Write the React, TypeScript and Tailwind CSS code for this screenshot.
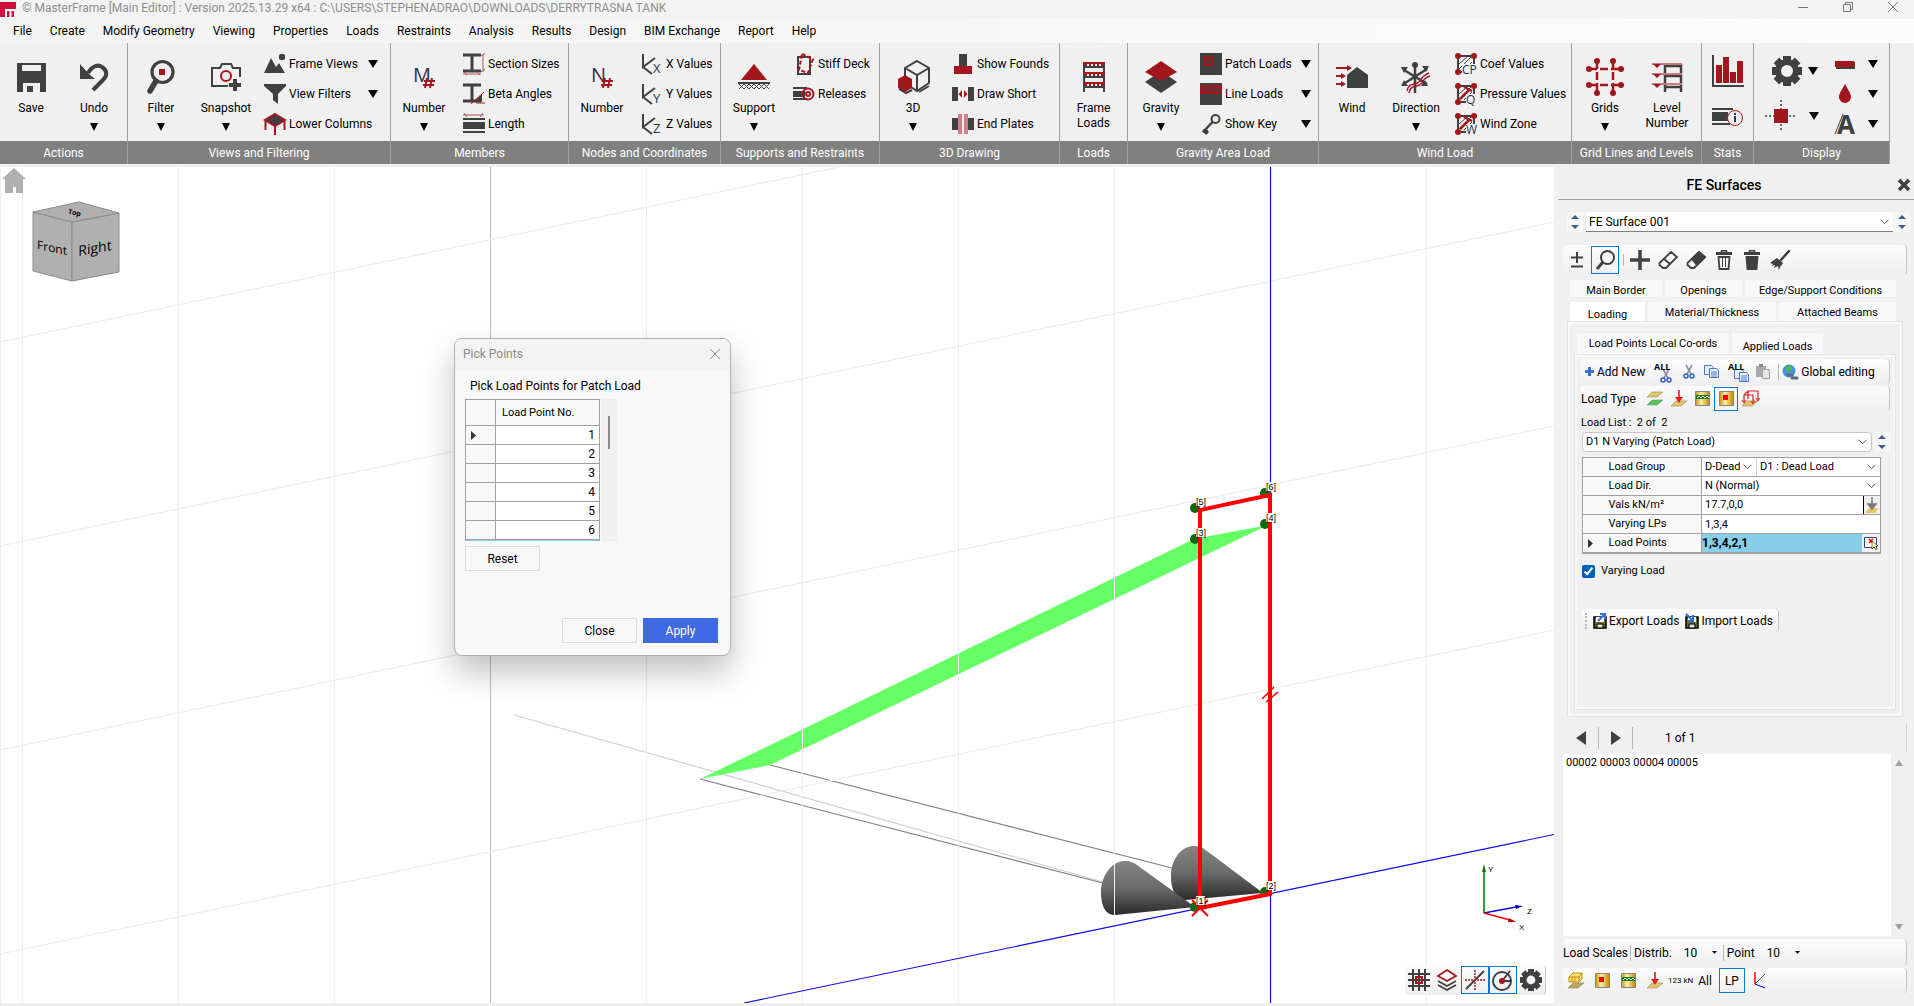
import { useState, type ReactNode } from "react";

const DARK = "#404040";
const RED = "#a3161e";
const NAVY = "#2b3450";

const menus = [
  "File", "Create", "Modify Geometry", "Viewing", "Properties", "Loads", "Restraints",
  "Analysis", "Results", "Design", "BIM Exchange", "Report", "Help",
];

/* ---------- shared bits ---------- */

function Svg({ w, h, children }: { w: number; h: number; children: ReactNode }) {
  return (
    <svg width={w} height={h} viewBox={`0 0 ${w} ${h}`} fill="none" className="shrink-0 overflow-visible" aria-hidden="true">
      {children}
    </svg>
  );
}

function Arrow() {
  return (
    <Svg w={10} h={8}>
      <path d="M0 0h10L5 8z" fill="#000" />
    </Svg>
  );
}

function Group({ title, width, children }: { title: string; width: string; children: ReactNode }) {
  return (
    <section className={`flex shrink-0 flex-col border-r border-[#a0a0a0] ${width}`}>
      <div className="flex h-[98px]">{children}</div>
      <h2 className="flex h-[23px] items-center justify-center bg-[#808080] whitespace-nowrap text-white">{title}</h2>
    </section>
  );
}

function BigButton({ icon, label, arrow, width = "w-[66px]" }: { icon: ReactNode; label: string; arrow?: boolean; width?: string }) {
  return (
    <button className={`flex shrink-0 flex-col items-center pt-4 ${width}`}>
      <span className="flex h-[36px] items-center">{icon}</span>
      <span className="mt-[6px] leading-[15px]">{label}</span>
      {arrow && (
        <span className="mt-[7px]">
          <Svg w={8} h={8}>
            <path d="M0 0h8L4 8z" fill="#000" />
          </Svg>
        </span>
      )}
    </button>
  );
}

function Rows({ className = "", children }: { className?: string; children: ReactNode }) {
  return <div className={`flex flex-1 flex-col pt-[6px] ${className}`}>{children}</div>;
}

function Row({ icon, label, arrow }: { icon: ReactNode; label: string; arrow?: boolean }) {
  return (
    <button className="flex h-[30px] items-center gap-[3px] pr-[7px] pl-[6px] text-left whitespace-nowrap">
      {icon}
      <span>{label}</span>
      {arrow && <span className="ml-auto"><Arrow /></span>}
    </button>
  );
}

function Chevron() {
  return (
    <Svg w={9} h={6}>
      <path d="M.5.7l4 4 4-4" stroke="#555" />
    </Svg>
  );
}

function Combo({ label, value, className }: { label: string; value: string; className: string }) {
  return (
    <div className={`relative flex bg-white ${className}`}>
      <select aria-label={label} defaultValue={value} className="w-full appearance-none overflow-hidden bg-transparent pr-4 pl-[3px] outline-none">
        <option>{value}</option>
      </select>
      <span className="pointer-events-none absolute inset-y-0 right-[4px] flex items-center"><Chevron /></span>
    </div>
  );
}

function Spinner({ label }: { label: string }) {
  return (
    <span className="flex w-4 shrink-0 flex-col items-center justify-center gap-[6px] bg-[#f6f6f6]">
      <button aria-label={`${label} up`}><Svg w={8} h={4}><path d="M0 4h8L4 0z" fill="#3f5a8a" /></Svg></button>
      <button aria-label={`${label} down`}><Svg w={8} h={4}><path d="M0 0h8L4 4z" fill="#3f5a8a" /></Svg></button>
    </span>
  );
}

function Bar({ className, children }: { className: string; children: ReactNode }) {
  return (
    <div className={`flex items-center rounded-sm border-r border-[#c4c4c4] bg-linear-to-b from-[#fcfcfc] to-[#efefef] ${className}`}>
      {children}
    </div>
  );
}

/* ---------- ribbon icons ---------- */

const SaveIcon = () => (
  <Svg w={29} h={29}>
    <path fillRule="evenodd" d="M0 0h29v29h-6v-9H6v9H0zM5 2v6h19V2z" fill={DARK} />
    <path d="M10 23h6v6h-6z" fill={DARK} />
  </Svg>
);

const UndoIcon = () => (
  <Svg w={29} h={29}>
    <path d="M0 1l0 15h15L9 11z" fill={DARK} />
    <path d="M8 10c4-7 10-9 14-6 6 4 5 9 1 13L13 27" stroke={DARK} strokeWidth="4" />
  </Svg>
);

const FilterIcon = () => (
  <Svg w={28} h={34}>
    <circle cx="15.500" cy="12" r="10.500" stroke={DARK} strokeWidth="3.200" />
    <path d="M9 21L3 31" stroke={DARK} strokeWidth="5.500" strokeLinecap="round" />
    <path d="M12 9h6v6h-6z" fill={RED} />
  </Svg>
);

const SnapshotIcon = () => (
  <Svg w={31} h={28}>
    <path d="M17 23H1V5h8l2-4h9l2 4h7v9" stroke={DARK} strokeWidth="2" />
    <circle cx="15" cy="13" r="5" stroke={RED} strokeWidth="2" />
    <path d="M24 16v12M18 22h12" stroke={DARK} strokeWidth="4" />
  </Svg>
);

const FrameViewsIcon = () => (
  <Svg w={22} h={22}>
    <path d="M0 20L7 5l5 9 3-4 6 10z" fill={DARK} />
    <circle cx="18" cy="4" r="3.200" fill={DARK} />
  </Svg>
);

const FunnelIcon = () => (
  <Svg w={22} h={22}>
    <path d="M0 1h22v2l-8 8v10l-5-4v-6L0 3z" fill={DARK} />
  </Svg>
);

const ColumnsIcon = () => (
  <Svg w={22} h={22}>
    <path d="M11 1l10 6-10 6L1 7z" fill={DARK} stroke={RED} strokeWidth="2" />
    <path d="M1.500 8v9M11 13v9M20.500 8v9" stroke={RED} strokeWidth="2" />
  </Svg>
);

const LetterHash = ({ letter }: { letter: string }) => (
  <Svg w={24} h={24}>
    <text x="1" y="17" fontSize="20" fill={NAVY} fontFamily="Open Sans, sans-serif">{letter}</text>
    <path d="M15 13l-2 10M20 13l-2 10M12 16h11M11 20h11" stroke={RED} strokeWidth="2" />
  </Svg>
);

const Section = ({ kind }: { kind: "size" | "beta" }) => (
  <Svg w={22} h={22}>
    <path d="M0 2h18M9 2v16M0 18h18" stroke={DARK} strokeWidth="3" />
    {kind === "size" ? (
      <path d="M20 1v18M18 3l4-3M18 19l4-3M0 21h18M1 19l3 3M14 19l3 3" stroke="#b5525a" />
    ) : (
      <>
        <path d="M10 19l9-8v8z" fill={DARK} />
        <path d="M8 21L21 9M13 20h9" stroke={RED} />
      </>
    )}
  </Svg>
);

const LengthIcon = () => (
  <Svg w={22} h={22}>
    <path d="M0 2h21M1 0l3 4M17 4l3-4" stroke="#b5525a" />
    <path d="M0 6h22M0 19h22" stroke={DARK} strokeWidth="2" />
    <path d="M0 9h22v7H0z" fill={DARK} />
  </Svg>
);

const AxisIcon = ({ letter }: { letter: string }) => (
  <Svg w={22} h={22}>
    <path d="M2 1v13l12-9M2 14l9 7" stroke={DARK} strokeWidth="2" />
    <text x="12" y="20" fontSize="13" fill={NAVY} fontFamily="Open Sans, sans-serif">{letter}</text>
  </Svg>
);

const SupportIcon = () => (
  <Svg w={32} h={26}>
    <path d="M16 0l13 16H3z" fill={RED} />
    <path d="M0 19h32" stroke={DARK} strokeWidth="2" />
    <path d="M1 25l5-5 5 5 5-5 5 5 5-5 5 5M1 20l5 5 5-5 5 5 5-5 5 5 5-5" stroke={DARK} />
  </Svg>
);

const StiffIcon = () => (
  <Svg w={22} h={22}>
    <path d="M5 4h12v17H5z" stroke={DARK} strokeWidth="2" />
    <path d="M9 1l11 5-5 14-9-3z" stroke={RED} strokeWidth="2" strokeDasharray="4 2" />
  </Svg>
);

const ReleaseIcon = () => (
  <Svg w={22} h={14}>
    <path d="M0 1h14M0 12h14" stroke={DARK} strokeWidth="2" />
    <path d="M0 4h12v6H0z" fill={DARK} />
    <circle cx="15" cy="7" r="5.500" stroke={RED} strokeWidth="2" />
    <circle cx="15" cy="7" r="2" stroke={RED} strokeWidth="2" />
  </Svg>
);

const CubeIcon = () => (
  <Svg w={33} h={34}>
    <path d="M20 1l12 7v15l-12 8-12-8V8zM8 8l12 7 12-7M20 15v16" stroke={DARK} strokeWidth="2" />
    <path d="M8 15l7 4v9l-7 4-7-4v-9z" fill={RED} />
    <path d="M2 29l7 4 6-3M22 32l10-6" stroke={DARK} strokeWidth="2" />
  </Svg>
);

const FoundIcon = () => (
  <Svg w={22} h={22}>
    <path d="M7 1h8v12H7z" fill={DARK} />
    <path d="M2 13h18v8H2z" fill={RED} />
  </Svg>
);

const ShortIcon = () => (
  <Svg w={22} h={14}>
    <path d="M0 0h6v14H0zM16 0h6v14h-6z" fill={DARK} />
    <path d="M10 3v8L6.500 7zM12 3v8l3.500-4z" fill={RED} />
  </Svg>
);

const PlatesIcon = () => (
  <Svg w={22} h={22}>
    <path d="M0 5h7v12H0zM15 5h7v12h-7z" fill={DARK} />
    <path d="M6 1h4v20H6zM12 1h4v20h-4z" fill="#cf8086" />
  </Svg>
);

const LoadsIcon = () => (
  <Svg w={22} h={30}>
    <path d="M1 0v30M21 0v30M0 5h22M0 15h22M0 25h22" stroke={DARK} strokeWidth="2" />
    <path d="M0 1h22M0 11h22M0 21h22" stroke={RED} strokeWidth="2" />
    <path d="M2 3h18M2 13h18M2 23h18" stroke={RED} strokeWidth="2" strokeDasharray="2 2" />
  </Svg>
);

const GravityIcon = () => (
  <Svg w={32} h={32}>
    <path d="M16 10l16 11-16 11L0 21z" fill={DARK} />
    <path d="M16 0l16 11-16 9L0 11z" fill={RED} />
  </Svg>
);

const PatchIcon = () => (
  <Svg w={22} h={22}>
    <path d="M0 0h22v22H0z" fill={DARK} />
    <path d="M3 3h10v10H3z" fill={RED} />
    <circle cx="8" cy="8" r="3" stroke={DARK} />
    <path d="M6 6l4 4M10 6l-4 4" stroke={DARK} />
  </Svg>
);

const LineIcon = () => (
  <Svg w={22} h={22}>
    <path d="M0 0h22v22H0z" fill={DARK} />
    <path d="M0 2h22v9H0z" fill={RED} />
    <path d="M2 4l6 5M8 4l6 5M14 4l6 5" stroke={DARK} strokeWidth="2" />
  </Svg>
);

const KeyIcon = () => (
  <Svg w={22} h={22}>
    <circle cx="15.500" cy="6" r="4" stroke={DARK} strokeWidth="2" />
    <path d="M12.500 9L3 19M3 17l4 4" stroke={DARK} strokeWidth="2.500" />
    <path d="M2 19l4-4 3 4-2 2z" fill={DARK} />
  </Svg>
);

const WindIcon = () => (
  <Svg w={33} h={22}>
    <path d="M21 1l11 8v13H11V9z" fill={DARK} />
    <path d="M0 2h12M0 10h6M0 18h6" stroke={RED} strokeWidth="2" />
    <path d="M11-1l5 3-5 3zM5 7l5 3-5 3zM5 15l5 3-5 3z" fill={RED} />
  </Svg>
);

const DirectionIcon = () => (
  <Svg w={30} h={31}>
    <path d="M14 3v28M3 8l23 14M26 7L4 21" stroke={DARK} strokeWidth="2.500" />
    <circle cx="14" cy="3" r="3" fill={DARK} />
    <path d="M0 5h7l-4 6zM28 4h-7l4 6zM0 24h7l-4-6zM27 24h-7l4-6z" fill={DARK} />
    <path d="M6 29c2-10 8-4 13-10 2-4 4-6 9-8M8 31c2-10 8-4 13-10 2-4 3-5 8-7" stroke={RED} strokeWidth="1.400" />
  </Svg>
);

const ZoneIcon = ({ tag }: { tag: string }) => (
  <Svg w={22} h={22}>
    <path d="M3 3h16v16H3z" stroke={DARK} strokeWidth="2" />
    <path d="M4 11l8-7M4 16l12-12M9 17l8-8" stroke={DARK} />
    {tag !== "CP" && <path d="M5 16l9-9M9 4l8 4" stroke={RED} strokeWidth="2.500" />}
    <path d={tag === "CP" ? "M7 11h15v11H7z" : "M11 11h11v11H11z"} fill="#f0f0f0" />
    <circle cx="3" cy="3" r="3" fill={RED} />
    <circle cx="19" cy="3" r="3" fill={RED} />
    <circle cx="3" cy="19" r="3" fill={RED} />
    <text x={tag === "CP" ? 7 : 11} y="21" fontSize="12" fill={NAVY} fontFamily="Open Sans, sans-serif">{tag}</text>
  </Svg>
);

const GridsIcon = () => (
  <Svg w={38} h={38}>
    <path d="M11 3v32M27 3v32M3 11h32M3 27h32" stroke={RED} strokeWidth="2.500" strokeDasharray="8 3" />
    {[[11, 3], [27, 3], [11, 35], [27, 35], [3, 11], [35, 11], [3, 27], [35, 27]].map(([x, y]) => (
      <circle key={`${x}-${y}`} cx={x} cy={y} r="3" fill={RED} />
    ))}
  </Svg>
);

const LevelIcon = () => (
  <Svg w={31} h={30}>
    <path d="M13 2v28M29 2v28M12 4h18M12 14h18M12 25h18" stroke={DARK} strokeWidth="2.500" />
    <path d="M0 2h30M0 12h30M0 22h30" stroke="#c77b81" strokeWidth="2" />
    <path d="M1 2h8L5 6zM1 12h8l-4 4zM1 22h8l-4 4z" fill={RED} />
  </Svg>
);

const ChartIcon = () => (
  <Svg w={32} h={33}>
    <path d="M1 0v31h31" stroke={DARK} strokeWidth="2" />
    <path d="M4 10h6v18H4zM11 2h6v26h-6zM18 17h6v11h-6zM25 6h6v22h-6z" fill={RED} />
  </Svg>
);

const InfoIcon = () => (
  <Svg w={31} h={20}>
    <path d="M0 2h21M0 17h18" stroke={DARK} strokeWidth="2" />
    <path d="M0 5h16v9H0z" fill={DARK} />
    <circle cx="23" cy="11" r="7.500" fill="#f0f0f0" stroke={RED} />
    <path d="M23 9v6M23 6v2" stroke={NAVY} strokeWidth="2" />
  </Svg>
);

const GearIcon = ({ size }: { size: number }) => (
  <svg width={size} height={size} viewBox="-15 -15 30 30" className="shrink-0" aria-hidden="true">
    {[0, 45, 90, 135, 180, 225, 270, 315].map((a) => (
      <path key={a} d="M-4-15h8v7h-8z" fill={DARK} transform={`rotate(${a})`} />
    ))}
    <circle r="9" fill="none" stroke={DARK} strokeWidth="6" />
  </svg>
);

const TargetIcon = () => (
  <Svg w={32} h={32}>
    <path d="M16 0v32M0 16h32" stroke={DARK} strokeWidth="1.500" strokeDasharray="2 2" />
    <path d="M9 9h14v14H9z" fill={RED} />
  </Svg>
);

/* ---------- side panel icons ---------- */

const Slab = ({ y, fill }: { y: number; fill: string }) => (
  <path d={`M5 ${y}h11l-6 5H0z`} fill={fill} stroke="#8a8a7a" strokeWidth=".6" />
);

const GoldBox = ({ kind }: { kind: "patch" | "line" }) => (
  <Svg w={15} h={15}>
    <defs>
      <linearGradient id="gold">
        <stop offset="0" stopColor="#c98f10" />
        <stop offset=".4" stopColor="#fff0a8" />
        <stop offset="1" stopColor="#c98000" />
      </linearGradient>
    </defs>
    <path d="M.5.500h14v14H.5z" fill="url(#gold)" stroke="#808890" />
    {kind === "patch" ? (
      <path d="M4 4h5v5H4z" fill="#f00" />
    ) : (
      <>
        <path d="M1 4h13v4H1z" fill="#0a8020" />
        <path d="M2 7l2-2 2 2 2-2 2 2 2-2 2 2" stroke="#fff" />
      </>
    )}
  </Svg>
);

const TwoSlabs = () => (
  <Svg w={16} h={15}>
    <Slab y={1} fill="#e3c766" />
    <Slab y={9} fill="#4fc45a" />
  </Svg>
);

const PointSlab = () => (
  <Svg w={16} h={17}>
    <Slab y={11} fill="#e3c766" />
    <path d="M8 0v10" stroke="#f00" strokeWidth="1.500" />
    <path d="M4 7h8l-4 6z" fill="#e02020" />
  </Svg>
);

const BoxSlab = () => (
  <Svg w={18} h={17}>
    <Slab y={11} fill="#e3c766" />
    <path d="M2 12V5l4-4h10v9M2 5h9v8M6 1v8" stroke="#e02020" strokeWidth="1.200" />
    <path d="M0 10l2 3 2-3M14 8l2 3 2-3M9 11l2 3 2-3" stroke="#e02020" />
  </Svg>
);

const CrateSlab = () => (
  <Svg w={16} h={17}>
    <Slab y={11} fill="#b9a55a" />
    <path d="M1 5l4-4h9v6l-3 3H1zM1 5h10v5M11 5l3-4M4 5v5M7 5v5" fill="#ffe27a" stroke="#c88a00" />
  </Svg>
);

const Scissors = () => (
  <>
    <path d="M3 0l5 9M9 0L4 9" stroke="#8a94a8" strokeWidth="1.600" />
    <circle cx="3" cy="11" r="2" stroke="#2f5fc0" strokeWidth="1.500" />
    <circle cx="9" cy="11" r="2" stroke="#2f5fc0" strokeWidth="1.500" />
  </>
);

const Pages = () => (
  <>
    <path d="M.5.500h7l2 2v7h-9z" fill="#e8f0ff" stroke="#4a78c8" />
    <path d="M5.500 3.500h7l2 2v7h-9z" fill="#e8f0ff" stroke="#4a78c8" />
    <path d="M7 7h6M7 9h6M7 11h6" stroke="#4a78c8" />
  </>
);

const AllTag = ({ children }: { children: ReactNode }) => (
  <Svg w={20} h={19}>
    <g transform="translate(6 7)">{children}</g>
    <text x="0" y="8" fontSize="9" fontWeight="700" fill="#000" fontFamily="Open Sans, sans-serif">ALL</text>
  </Svg>
);

const DiskIcon = ({ dir }: { dir: "out" | "in" }) => (
  <Svg w={14} h={16}>
    <path d="M1 4h12v11H1z" fill="#6d6d2a" stroke="#000" strokeWidth="1.500" />
    <path d="M3 4h8v5H3z" fill="#fff" />
    <path d="M4 11h6v4H4z" fill="#ddd" stroke="#000" />
    <path d={dir === "out" ? "M5 8l6-6M7 1h5v5" : "M1 1l6 6M8 2v6H3"} stroke="#2f6fe0" strokeWidth="2" />
  </Svg>
);

const Broom = () => (
  <Svg w={20} h={20}>
    <path d="M19 1L11 10" stroke={DARK} strokeWidth="2.500" strokeLinecap="round" />
    <path d="M7 8l6 5-2 3-7-6z" fill={DARK} />
    <path d="M4 10L0 13l3 1-1 2 3-1-1 3 4-2 1 4 2-5z" fill={DARK} />
  </Svg>
);

const Trash = ({ solid }: { solid?: boolean }) => (
  <Svg w={16} h={20}>
    <path d="M0 2h16v3H0z" fill={DARK} />
    <path d="M5.500 2V.700h5V2" stroke={DARK} strokeWidth="1.500" />
    <path d="M2.500 7h11l-1 12h-9z" fill={solid ? DARK : "none"} stroke={DARK} strokeWidth="1.800" />
    {!solid && <path d="M6.500 8v9M9.500 8v9" stroke={DARK} />}
  </Svg>
);

const Rubber = ({ solid }: { solid?: boolean }) => (
  <Svg w={20} h={20}>
    <path d="M1.500 13L13 2l6 5L8 18H5l-3.500-3z" stroke={DARK} strokeWidth="1.800" />
    <path d={solid ? "M6 9l7-7 6 5-8 8z" : "M6 9l6 5"} fill={solid ? DARK : "none"} stroke={DARK} strokeWidth="1.800" />
  </Svg>
);

/* ---------- viewport ---------- */

const gridX = [22, 178, 334, 646, 802, 958, 1114, 1426];
const gridY = [342, 546, 750, 954];
const nodes = [
  { n: 5, x: 1195, y: 508 },
  { n: 6, x: 1265, y: 493 },
  { n: 3, x: 1195, y: 539 },
  { n: 4, x: 1265, y: 524 },
  { n: 2, x: 1265, y: 892 },
  { n: 1, x: 1195, y: 907 },
];

function Scene() {
  return (
    <svg viewBox="0 167 1554 836" preserveAspectRatio="xMinYMin slice" className="absolute inset-0 h-full w-full" fill="none">
      <defs>
        <linearGradient id="cone" x1="0" y1="0" x2="0" y2="1">
          <stop offset="0" stopColor="#858585" />
          <stop offset=".5" stopColor="#6a6a6a" />
          <stop offset="1" stopColor="#2a2a2a" />
        </linearGradient>
      </defs>
      <path d="M514 715L1103 882" stroke="#d0d0d0" strokeWidth="1.200" />
      <path d="M700 779L1103 883M770 765L1172 868" stroke="#808080" strokeWidth="1.200" />
      <path d="M700 779L1194 539L1268 525L770 765z" fill="#66ff66" />
      <path d="M1171 876c0-14 8-29 22-30 6 0 9 1 14 5l56 42-78 7c-9 0-14-10-14-24z" fill="url(#cone)" />
      <path d="M1101 892c0-14 9-30 23-31 6 0 9 1 13 4l58 42-80 8c-10 0-14-10-14-23z" fill="url(#cone)" />
      {gridX.map((x) => (
        <path key={x} d={`M${x + 0.5} 167V1003`} stroke="#eeeeee" />
      ))}
      <path d="M.5 167V1003" stroke="#eeeeee" />
      <path d="M490.500 167V1003" stroke="#bdbdbd" />
      {gridY.map((y) => (
        <path key={y} d={`M0 ${y}L1554 ${y - 324}`} stroke="#ececec" strokeWidth="1.200" />
      ))}
      <path d="M1270.500 167V1003M744 1003L1554 834.500" stroke="#0a0af0" strokeWidth="1.200" />
      {nodes.map(({ n, x, y }) => (
        <circle key={n} cx={x} cy={y} r="5" fill="#0a6a0a" />
      ))}
      <path d="M1200 908V510L1270 495V894z" stroke="#f00" strokeWidth="4" />
      <path d="M1192 900l16 16M1208 900l-16 16" stroke="#f00" strokeWidth="2" />
      <path d="M1262 699l12-12M1266 702l12-10" stroke="#f00" strokeWidth="1.500" />
      {nodes.map(({ n, x, y }) => (
        <g key={n}>
          <path d={`M${x + 1} ${y - 11}h9v9h-9z`} fill="#fff" />
          <text x={x + 1} y={y - 3} fontSize="9" fill="#000" fontFamily="Liberation Sans, sans-serif">[{n}]</text>
        </g>
      ))}
      {/* axis triad */}
      <path d="M1484 913v-42" stroke="#30a030" strokeWidth="2" />
      <path d="M1482 872l2-8 2 8z" fill="#0a7a0a" />
      <path d="M1484 913l32-6" stroke="#0a0af0" strokeWidth="1.500" />
      <path d="M1515 905l8 1-7 3z" fill="#0000b0" />
      <path d="M1484 913l26 7" stroke="#f00" strokeWidth="1.500" />
      <path d="M1509 918l7 4-8 0z" fill="#c00000" />
      <g fontSize="8" fill="#000" fontFamily="Liberation Sans, sans-serif">
        <text x="1488" y="872">Y</text>
        <text x="1527" y="914">Z</text>
        <text x="1519" y="930">X</text>
      </g>
      {/* home + view cube */}
      <path d="M14 168l12 11h-3v14h-7v-6h-3v6H5v-14H2z" fill="#b0b0b0" />
      <g stroke="#8a8a8a" fill="#b0b0b0">
        <path d="M33 212l39 10v59l-39-10z" />
        <path d="M72 222l47-9v59l-47 9z" />
        <path d="M33 212l46-10 40 11-47 9z" />
      </g>
      <g fill="#000" fontFamily="Open Sans, sans-serif" textAnchor="middle">
        <text transform="translate(52 252) skewY(12)" fontSize="12">Front</text>
        <text transform="translate(95 253) skewY(-10)" fontSize="14">Right</text>
        <text transform="translate(74 215) rotate(12)" fontSize="7" fontWeight="700">Top</text>
      </g>
    </svg>
  );
}

function ViewTools() {
  const cell = "flex h-7 w-7 items-center justify-center";
  return (
    <Bar className="absolute right-[8px] bottom-[8px] h-[30px]">
      <button aria-label="Grid" className={cell}>
        <Svg w={22} h={22}>
          <path d="M5 0v22M11 0v22M17 0v22M0 5h22M0 11h22M0 17h22" stroke={DARK} strokeWidth="2" />
          <path d="M8 8h6v6H8z" stroke={RED} strokeWidth="2" />
        </Svg>
      </button>
      <button aria-label="Layers" className={cell}>
        <Svg w={20} h={22}>
          <path d="M1 12l9 5 9-5M1 16l9 5 9-5" stroke={DARK} strokeWidth="1.800" />
          <path d="M10 1l9 6-9 5-9-5z" stroke={RED} strokeWidth="1.800" />
        </Svg>
      </button>
      <button aria-label="Snap to line" className={`${cell} border border-[#0078d7]`}>
        <Svg w={20} h={20}>
          <path d="M1 19L19 1" stroke={DARK} strokeWidth="2" />
          <path d="M10 0v20M0 10h20" stroke={RED} strokeWidth="1.500" strokeDasharray="2 1" />
        </Svg>
      </button>
      <button aria-label="Snap to centre" className={`${cell} border border-[#0078d7]`}>
        <Svg w={22} h={22}>
          <circle cx="10" cy="12" r="9" stroke={DARK} strokeWidth="2" />
          <path d="M10 12h10M10 12l8-10" stroke={DARK} strokeWidth="2" />
          <circle cx="10" cy="12" r="3" fill={RED} />
        </Svg>
      </button>
      <button aria-label="Settings" className={cell}><GearIcon size={22} /></button>
    </Bar>
  );
}

function PickPoints() {
  const [selected, setSelected] = useState(1);
  return (
    <div role="dialog" aria-label="Pick Points" className="absolute top-[171px] left-[454px] w-[277px] overflow-hidden rounded-lg border border-[#b0b0b0] bg-[#f8f8f8] shadow-[0_16px_32px_rgba(0,0,0,0.25)]">
      <div className="flex h-[30px] items-center justify-between bg-[#f3f3f3] pr-[10px] pl-2 text-[#8a8a8a]">
        <span>Pick Points</span>
        <button aria-label="Close window">
          <Svg w={10} h={10}><path d="M0 0l10 10M10 0L0 10" stroke="#888" /></Svg>
        </button>
      </div>
      <div className="pt-2 pr-[12px] pb-[12px] pl-[10px]">
        <p className="pl-[5px] leading-[18px]">Pick Load Points for Patch Load</p>
        <div className="mt-[4px] flex h-[142px] overflow-hidden">
          <table className="w-[135px] table-fixed border-collapse self-start bg-white">
            <thead>
              <tr className="h-[26px]">
                <th aria-label="Current row" className="w-[30px] border border-[#a0a0a0] bg-[#f8f8f8]" />
                <th className="border border-[#a0a0a0] bg-[#f8f8f8] pl-[6px] text-left text-[11px] font-normal">Load Point No.</th>
              </tr>
            </thead>
            <tbody>
              {[1, 2, 3, 4, 5, 6].map((n) => (
                <tr key={n} className="h-[19px]" onClick={() => setSelected(n)}>
                  <td className="border border-[#a0a0a0] bg-[#f8f8f8] pl-[5px]">
                    {selected === n && <Svg w={5} h={9}><path d="M0 0l5 4.500L0 9z" fill="#333" /></Svg>}
                  </td>
                  <td className="border border-[#a0a0a0] pr-1 text-right leading-[18px]">{n}</td>
                </tr>
              ))}
              <tr className="h-[19px] bg-[#87ceeb]"><td className="border border-[#a0a0a0]" /><td className="border border-[#a0a0a0]" /></tr>
            </tbody>
          </table>
          <div className="ml-px w-4 bg-[#f0f0f0] pt-[17px] pl-[7px]">
            <div className="h-[33px] w-[2px] bg-[#8a8a8a]" />
          </div>
        </div>
        <button className="mt-[5px] h-[25px] w-[75px] border border-[#dcdcdc]">Reset</button>
        <div className="mt-[47px] flex justify-end gap-[6px]">
          <button className="h-[25px] w-[75px] border border-[#dcdcdc]">Close</button>
          <button className="h-[25px] w-[75px] bg-[#4169e1] text-white">Apply</button>
        </div>
      </div>
    </div>
  );
}

/* ---------- FE Surfaces panel ---------- */

function Tab({ label, className }: { label: string; className: string }) {
  return (
    <button role="tab" className={`flex justify-center overflow-hidden bg-[#f8f8f8] whitespace-nowrap ${className}`}>
      {label}
    </button>
  );
}

function LoadGrid() {
  const head = "border-y border-[#a0a0a0] bg-[#f8f8f8] text-left font-normal";
  const name = `${head} border-r w-[93px]`;
  const value = "border border-[#a0a0a0] p-0";
  return (
    <table className="mt-[5px] w-[299px] table-fixed border-collapse border border-[#a0a0a0] border-b-2 bg-white">
      <colgroup>
        <col className="w-[26px]" />
        <col className="w-[93px]" />
        <col />
      </colgroup>
      <tbody>
        <tr className="h-[19px]">
          <td className={head} />
          <th className={name}>Load Group</th>
          <td className={value}>
            <div className="flex divide-x divide-[#d0d0d0]">
              <Combo label="Load group" value="D-Dead" className="h-[18px] w-[55px] shrink-0" />
              <Combo label="Load case" value="D1 : Dead Load" className="h-[18px] flex-1" />
            </div>
          </td>
        </tr>
        <tr className="h-[19px]">
          <td className={head} />
          <th className={name}>Load Dir.</th>
          <td className={value}><Combo label="Load direction" value="N (Normal)" className="h-[18px]" /></td>
        </tr>
        <tr className="h-[19px]">
          <td className={head} />
          <th className={name}>Vals kN/m²</th>
          <td className={value}>
            <div className="flex h-[18px]">
              <input aria-label="Vals kN/m²" defaultValue="17.7,0,0" className="min-w-0 flex-1 border-r border-black pl-[3px] outline-none" />
              <button aria-label="Edit values" className="bg-[#f0f0f0] px-[1px]">
                <Svg w={14} h={16}>
                  <path d="M4 11h10l-4 5H0z" fill="#e3c766" />
                  <path d="M7 0v9M3 7l4 5 4-5z" stroke="#777" fill="#777" strokeWidth="1.500" />
                </Svg>
              </button>
            </div>
          </td>
        </tr>
        <tr className="h-[19px]">
          <td className={head} />
          <th className={name}>Varying LPs</th>
          <td className={value}>
            <input aria-label="Varying LPs" defaultValue="1,3,4" className="block h-[18px] w-full pl-[3px] outline-none" />
          </td>
        </tr>
        <tr className="h-[19px]">
          <td className={`${head} pl-[5px]`}>
            <Svg w={5} h={9}><path d="M0 0l5 4.500L0 9z" fill="#333" /></Svg>
          </td>
          <th className={name}>Load Points</th>
          <td className={value}>
            <div className="flex h-[18px] bg-[#87ceeb]">
              <input aria-label="Load Points" defaultValue="1,3,4,2,1" className="min-w-0 flex-1 text-[12px] font-bold outline-none" />
              <button aria-label="Pick load points" className="bg-[#f0f0f0] px-[2px]">
                <Svg w={14} h={16}>
                  <path d="M.5 2.500h12v10H.5z" fill="#fff" stroke="#334a80" />
                  <path d="M5 4l4 4M9 4L5 8" stroke="#e00" strokeWidth="1.500" />
                  <path d="M8 6v8l2-2 2 3 1-1-1-3h2z" fill="#ffffc0" stroke="#333" strokeWidth=".7" />
                </Svg>
              </button>
            </div>
          </td>
        </tr>
      </tbody>
    </table>
  );
}

function SidePanel() {
  const [varying, setVarying] = useState(true);
  return (
    <aside className="flex w-[356px] shrink-0 flex-col pb-[13px]">
      <header className="flex h-[33px] items-center border-b border-[#a0a0a0] pt-[3px] pr-1">
        <h1 className="flex-1 pr-2 text-center text-sm font-medium">FE Surfaces</h1>
        <button aria-label="Close panel">
          <Svg w={12} h={12}><path d="M1 1l10 10M11 1L1 11" stroke={DARK} strokeWidth="3.500" /></Svg>
        </button>
      </header>

      <div className="mt-3 flex h-[20px] pr-[4px] pl-[9px]">
        <Spinner label="Surface" />
        <Combo label="Surface" value="FE Surface 001" className="mr-px ml-[3px] flex-1 border-b border-[#808080]" />
        <Spinner label="Surface list" />
      </div>

      <Bar className="mt-[13px] mr-[7px] ml-[5px] h-[30px] pl-[2px]">
        <button aria-label="Add or remove" className="flex w-6 justify-center">
          <Svg w={12} h={16}><path d="M6 0v11M0 5.500h12M0 14.500h12" stroke={DARK} strokeWidth="2" /></Svg>
        </button>
        <button aria-label="Zoom" className="ml-[2px] flex h-7 w-7 items-center justify-center border border-[#0078d7]">
          <Svg w={20} h={20}>
            <circle cx="12.500" cy="7.500" r="6.500" stroke={DARK} strokeWidth="2" />
            <path d="M8 12l-6 7" stroke={DARK} strokeWidth="3" />
          </Svg>
        </button>
        <span className="mx-1 h-3 w-px bg-[#b8b8b8]" />
        <div className="flex items-center gap-2 pl-[2px]">
          <button aria-label="Add"><Svg w={20} h={20}><path d="M10 0v20M0 10h20" stroke={DARK} strokeWidth="3.500" /></Svg></button>
          <button aria-label="Erase"><Rubber /></button>
          <button aria-label="Erase all"><Rubber solid /></button>
          <button aria-label="Delete" className="px-[2px]"><Trash /></button>
          <button aria-label="Delete all" className="px-[2px]"><Trash solid /></button>
          <button aria-label="Clean"><Broom /></button>
        </div>
      </Bar>

      <div role="tablist" className="mt-[5px] mr-[18px] ml-3 flex h-[17px] gap-[3px] text-[11px] leading-[22px]">
        <Tab label="Main Border" className="w-[92px]" />
        <Tab label="Openings" className="w-[77px]" />
        <Tab label="Edge/Support Conditions" className="flex-1" />
      </div>
      <div role="tablist" className="mt-[5px] mr-[18px] ml-3 flex h-[20px] gap-[3px] text-[11px] leading-[22px]">
        <Tab label="Loading" className="w-[75px] bg-white pt-[2px]" />
        <Tab label="Material/Thickness" className="w-[128px]" />
        <Tab label="Attached Beams" className="flex-1" />
      </div>

      <div className="mr-[12px] ml-[10px] border-2 border-[#f8f8f8] px-[5px] pt-[9px] pb-[5px] outline outline-[#e4e4e4]">
        <div role="tablist" className="ml-[2px] flex h-[22px] gap-[3px] text-[11px] leading-[22px]">
          <Tab label="Load Points Local Co-ords" className="w-[152px]" />
          <Tab label="Applied Loads" className="w-[91px] pt-[3px]" />
        </div>
        <div className="border-2 border-[#f8f8f8] px-[3px] pt-[2px] pb-[75px] outline outline-[#e4e4e4]">
          <Bar className="h-[25px] gap-[9px] pl-[5px]">
            <button className="flex items-center gap-[3px] whitespace-nowrap">
              <Svg w={9} h={9}><path d="M4.500 0v9M0 4.500h9" stroke="#3a6fd0" strokeWidth="3" /></Svg>
              Add New
            </button>
            <button aria-label="Cut all"><AllTag><Scissors /></AllTag></button>
            <button aria-label="Cut"><Svg w={12} h={14}><Scissors /></Svg></button>
            <button aria-label="Copy"><Svg w={15} h={13}><Pages /></Svg></button>
            <button aria-label="Copy all"><AllTag><Pages /></AllTag></button>
            <button aria-label="Paste" disabled className="-mx-[2px]">
              <Svg w={16} h={15}>
                <path d="M1 2h10v11H1z" fill="#a8a8a8" /><path d="M4 0h4v3H4z" fill="#888" />
                <path d="M7.500 5.500h7v9h-7z" fill="#e4e4e4" stroke="#a0a0a0" />
              </Svg>
            </button>
            <button className="flex items-center gap-[3px] border-l border-[#b8b8b8] pl-[3px] whitespace-nowrap">
              <Svg w={16} h={16}>
                <circle cx="7" cy="7" r="6.500" fill="#4a90e0" />
                <path d="M3 3l5-2 2 4-3 3-3-1zM5 9l4 1-2 3z" fill="#4cb84c" />
                <path d="M6 11h4M10 14h5" stroke="#5a6a80" strokeWidth="3" strokeLinecap="round" />
              </Svg>
              Global editing
            </button>
          </Bar>
          <Bar className="mt-[2px] h-[25px] gap-1 pl-[1px]">
            <span className="w-[62px] whitespace-nowrap">Load Type</span>
            <button aria-label="Area load"><TwoSlabs /></button>
            <button aria-label="Point load" className="px-1"><PointSlab /></button>
            <button aria-label="Line load"><GoldBox kind="line" /></button>
            <button aria-label="Patch load" className="flex h-6 w-6 items-center justify-center border border-[#0078d7]"><GoldBox kind="patch" /></button>
            <button aria-label="Box load"><BoxSlab /></button>
          </Bar>
          <p className="mt-[3px] ml-px text-[11px] leading-[18px] whitespace-pre">Load List :  2 of  2</p>
          <div className="ml-[2px] text-[11px]">
            <div className="flex h-[20px] gap-[2px]">
              <Combo label="Load List" value="D1 N Varying (Patch Load)" className="w-[291px] rounded-sm border border-[#c8c8c8]" />
              <Spinner label="Load" />
            </div>
            <LoadGrid />
            <label className="mt-[8px] flex h-[18px] items-center gap-[6px]">
              <input type="checkbox" checked={varying} onChange={(e) => setVarying(e.target.checked)} className="h-[13px] w-[13px] accent-[#005fb8]" />
              Varying Load
            </label>
            <Bar className="mt-[29px] h-[23px] w-[197px] gap-[6px] pl-[3px] text-[12px]">
              <span className="h-4 border-l-2 border-dotted border-[#b8b8b8]" />
              <button className="flex items-center gap-[2px] whitespace-nowrap"><DiskIcon dir="out" />Export Loads</button>
              <button className="flex items-center gap-[2px] whitespace-nowrap"><DiskIcon dir="in" />Import Loads</button>
            </Bar>
          </div>
        </div>
      </div>

      <div className="mt-[7px] mr-[7px] ml-[5px] flex h-[29px] items-center border-r border-[#d0d0d0]">
        <button aria-label="Previous" className="flex h-[22px] w-9 items-center justify-center border-r border-[#b8b8b8]">
          <Svg w={10} h={14}><path d="M10 0v14L0 7z" fill={DARK} /></Svg>
        </button>
        <button aria-label="Next" className="flex h-[22px] w-[34px] items-center justify-center border-r border-[#b8b8b8]">
          <Svg w={10} h={14}><path d="M0 0v14l10-7z" fill={DARK} /></Svg>
        </button>
        <span className="ml-8">1 of 1</span>
      </div>
      <div className="mt-[2px] mr-[7px] ml-[5px] flex flex-1">
        <div className="flex-1 bg-white pl-[3px] text-[11px] leading-[17px]">00002 00003 00004 00005</div>
        <div className="flex w-4 flex-col items-center justify-between py-[6px]">
          <Svg w={8} h={6}><path d="M0 6h8L4 0z" fill="#a0a0a0" /></Svg>
          <Svg w={8} h={6}><path d="M0 0h8L4 6z" fill="#a0a0a0" /></Svg>
        </div>
      </div>
      <Bar className="mt-[3px] mr-[7px] ml-[5px] h-[27px] whitespace-nowrap">
        <span className="border-r border-[#b8b8b8] pr-[2px]">Load Scales</span>
        <label className="flex items-center pl-[3px]">
          Distrib.
          <select defaultValue="10" className="ml-[12px] w-[28px] appearance-none outline-none"><option>10</option></select>
          <Svg w={5} h={3}><path d="M0 0h5L2.500 3z" fill="#000" /></Svg>
        </label>
        <label className="ml-[6px] flex items-center border-l border-[#b8b8b8] pl-[3px]">
          Point
          <select defaultValue="10" className="ml-[12px] w-[28px] appearance-none outline-none"><option>10</option></select>
          <Svg w={5} h={3}><path d="M0 0h5L2.500 3z" fill="#000" /></Svg>
        </label>
      </Bar>
      <Bar className="mt-[2px] mr-[7px] ml-[5px] h-[25px] gap-[11px] pl-[5px]">
        <button aria-label="Show area loads"><CrateSlab /></button>
        <button aria-label="Show patch loads"><GoldBox kind="patch" /></button>
        <button aria-label="Show line loads"><GoldBox kind="line" /></button>
        <button aria-label="Show point loads"><PointSlab /></button>
        <button className="-mx-[6px] text-[8px] whitespace-nowrap">123 kN</button>
        <button>All</button>
        <button className="-mx-1 flex h-[25px] w-[26px] items-center justify-center border border-[#0078d7]">LP</button>
        <button aria-label="Local axes" className="ml-[2px]">
          <Svg w={12} h={17}>
            <path d="M1 0v12" stroke="#f00" strokeWidth="1.500" />
            <path d="M1 12L11 2" stroke="#208020" />
            <path d="M1 12l10 4" stroke="#00f" />
          </Svg>
        </button>
      </Bar>
    </aside>
  );
}

/* ---------- ribbon ---------- */

function Ribbon() {
  return (
    <div className="flex overflow-hidden">
      <Group title="Actions" width="w-[128px]">
        <BigButton width="w-[62px]" icon={<SaveIcon />} label="Save" />
        <BigButton width="w-[64px]" icon={<UndoIcon />} label="Undo" arrow />
      </Group>
      <Group title="Views and Filtering" width="w-[263px]">
        <BigButton icon={<FilterIcon />} label="Filter" arrow />
        <BigButton width="w-[64px]" icon={<SnapshotIcon />} label="Snapshot" arrow />
        <Rows className="pr-[5px]">
          <Row icon={<FrameViewsIcon />} label="Frame Views" arrow />
          <Row icon={<FunnelIcon />} label="View Filters" arrow />
          <Row icon={<ColumnsIcon />} label="Lower Columns" />
        </Rows>
      </Group>
      <Group title="Members" width="w-[178px]">
        <BigButton icon={<LetterHash letter="M" />} label="Number" arrow />
        <Rows>
          <Row icon={<Section kind="size" />} label="Section Sizes" />
          <Row icon={<Section kind="beta" />} label="Beta Angles" />
          <Row icon={<LengthIcon />} label="Length" />
        </Rows>
      </Group>
      <Group title="Nodes and Coordinates" width="w-[152px]">
        <BigButton icon={<LetterHash letter="N" />} label="Number" />
        <Rows>
          <Row icon={<AxisIcon letter="X" />} label="X Values" />
          <Row icon={<AxisIcon letter="Y" />} label="Y Values" />
          <Row icon={<AxisIcon letter="Z" />} label="Z Values" />
        </Rows>
      </Group>
      <Group title="Supports and Restraints" width="w-[159px]">
        <BigButton icon={<SupportIcon />} label="Support" arrow />
        <Rows>
          <Row icon={<StiffIcon />} label="Stiff Deck" />
          <Row icon={<ReleaseIcon />} label="Releases" />
        </Rows>
      </Group>
      <Group title="3D Drawing" width="w-[180px]">
        <BigButton icon={<CubeIcon />} label="3D" arrow />
        <Rows>
          <Row icon={<FoundIcon />} label="Show Founds" />
          <Row icon={<ShortIcon />} label="Draw Short" />
          <Row icon={<PlatesIcon />} label="End Plates" />
        </Rows>
      </Group>
      <Group title="Loads" width="w-[68px]">
        <BigButton width="w-[67px] px-3" icon={<LoadsIcon />} label="Frame Loads" />
      </Group>
      <Group title="Gravity Area Load" width="w-[191px]">
        <BigButton icon={<GravityIcon />} label="Gravity" arrow />
        <Rows>
          <Row icon={<PatchIcon />} label="Patch Loads" arrow />
          <Row icon={<LineIcon />} label="Line Loads" arrow />
          <Row icon={<KeyIcon />} label="Show Key" arrow />
        </Rows>
      </Group>
      <Group title="Wind Load" width="w-[253px]">
        <BigButton icon={<WindIcon />} label="Wind" />
        <BigButton width="w-[62px]" icon={<DirectionIcon />} label="Direction" arrow />
        <Rows className="pl-[2px]">
          <Row icon={<ZoneIcon tag="CP" />} label="Coef Values" />
          <Row icon={<ZoneIcon tag="Q" />} label="Pressure Values" />
          <Row icon={<ZoneIcon tag="W" />} label="Wind Zone" />
        </Rows>
      </Group>
      <Group title="Grid Lines and Levels" width="w-[130px]">
        <BigButton icon={<GridsIcon />} label="Grids" arrow />
        <BigButton width="w-[58px] px-1" icon={<LevelIcon />} label="Level Number" />
      </Group>
      <Group title="Stats" width="w-[52px]">
        <div className="flex flex-1 flex-col items-center pt-3">
          <button aria-label="Statistics"><ChartIcon /></button>
          <button aria-label="Member info" className="mt-[19px]"><InfoIcon /></button>
        </div>
      </Group>
      <Group title="Display" width="w-[136px]">
        <div className="flex w-[67px] flex-col gap-[14px] pt-[13px] pl-[11px]">
          <button aria-label="Display settings" className="flex items-center gap-[6px] pl-[7px]"><GearIcon size={30} /><Arrow /></button>
          <button aria-label="Node display" className="flex items-center gap-[12px]"><TargetIcon /><Arrow /></button>
        </div>
        <div className="flex flex-1 flex-col pt-[6px] pl-[14px]">
          <button aria-label="Line colour" className="flex h-[30px] items-center gap-[13px]">
            <Svg w={20} h={22}><path d="M1 9h19v7H1z" fill={DARK} /><path d="M0 8h19v6H0z" fill={RED} /></Svg>
            <Arrow />
          </button>
          <button aria-label="Fill colour" className="flex h-[30px] items-center gap-[13px]">
            <Svg w={20} h={22}><path d="M10 1c3 6 6 9 6 13a6 6 0 01-12 0c0-4 3-7 6-13z" fill={RED} /></Svg>
            <Arrow />
          </button>
          <button aria-label="Text style" className="flex h-[30px] items-center gap-[13px]">
            <Svg w={20} h={22}>
              <path d="M0 21L8 1" stroke={DARK} />
              <text x="2" y="21" fontSize="26" fontWeight="700" fill={DARK} fontFamily="Open Sans, sans-serif">A</text>
            </Svg>
            <Arrow />
          </button>
        </div>
      </Group>
    </div>
  );
}

export default function App() {
  return (
    <div className="flex min-h-screen flex-col bg-[#f0f0f0] font-['Roboto',sans-serif] text-[12px] leading-[16px] text-black">
      <div className="flex h-[19px] items-center bg-[#f3f3f3] text-[#8f8f8f]">
        <Svg w={16} h={15}>
          <path d="M0 0h16v15H0z" fill="#d0103a" />
          <path d="M6 15V8h9v7M10.500 8v7" stroke="#fff" strokeWidth="2" />
        </Svg>
        <span className="-mt-[3px] ml-[6px] whitespace-nowrap">
          © MasterFrame [Main Editor] : Version 2025.13.29 x64 : C:\USERS\STEPHENADRAO\DOWNLOADS\DERRYTRASNA TANK
        </span>
        <div className="-mt-[6px] ml-auto flex items-center gap-[35px] pr-4">
          <button aria-label="Minimise"><Svg w={10} h={10}><path d="M0 5.500h10" stroke="#777" /></Svg></button>
          <button aria-label="Restore"><Svg w={10} h={10}><path d="M.5 2.500h7v7h-7zM2.500 2V.500h7v7H8" stroke="#777" /></Svg></button>
          <button aria-label="Close"><Svg w={10} h={10}><path d="M0 0l10 10M10 0L0 10" stroke="#777" /></Svg></button>
        </div>
      </div>
      <nav className="flex h-[24px] items-center gap-[18px] bg-linear-to-r from-[#f3f3f3] to-[#fcfcfc] pl-[13px]">
        {menus.map((m) => (
          <button key={m} className="whitespace-nowrap">{m}</button>
        ))}
      </nav>
      <Ribbon />
      <div className="flex flex-1 gap-[4px] pt-[3px]">
        <main className="relative mb-[3px] min-w-0 flex-1 overflow-hidden bg-white">
          <Scene />
          <PickPoints />
          <ViewTools />
        </main>
        <SidePanel />
      </div>
    </div>
  );
}
